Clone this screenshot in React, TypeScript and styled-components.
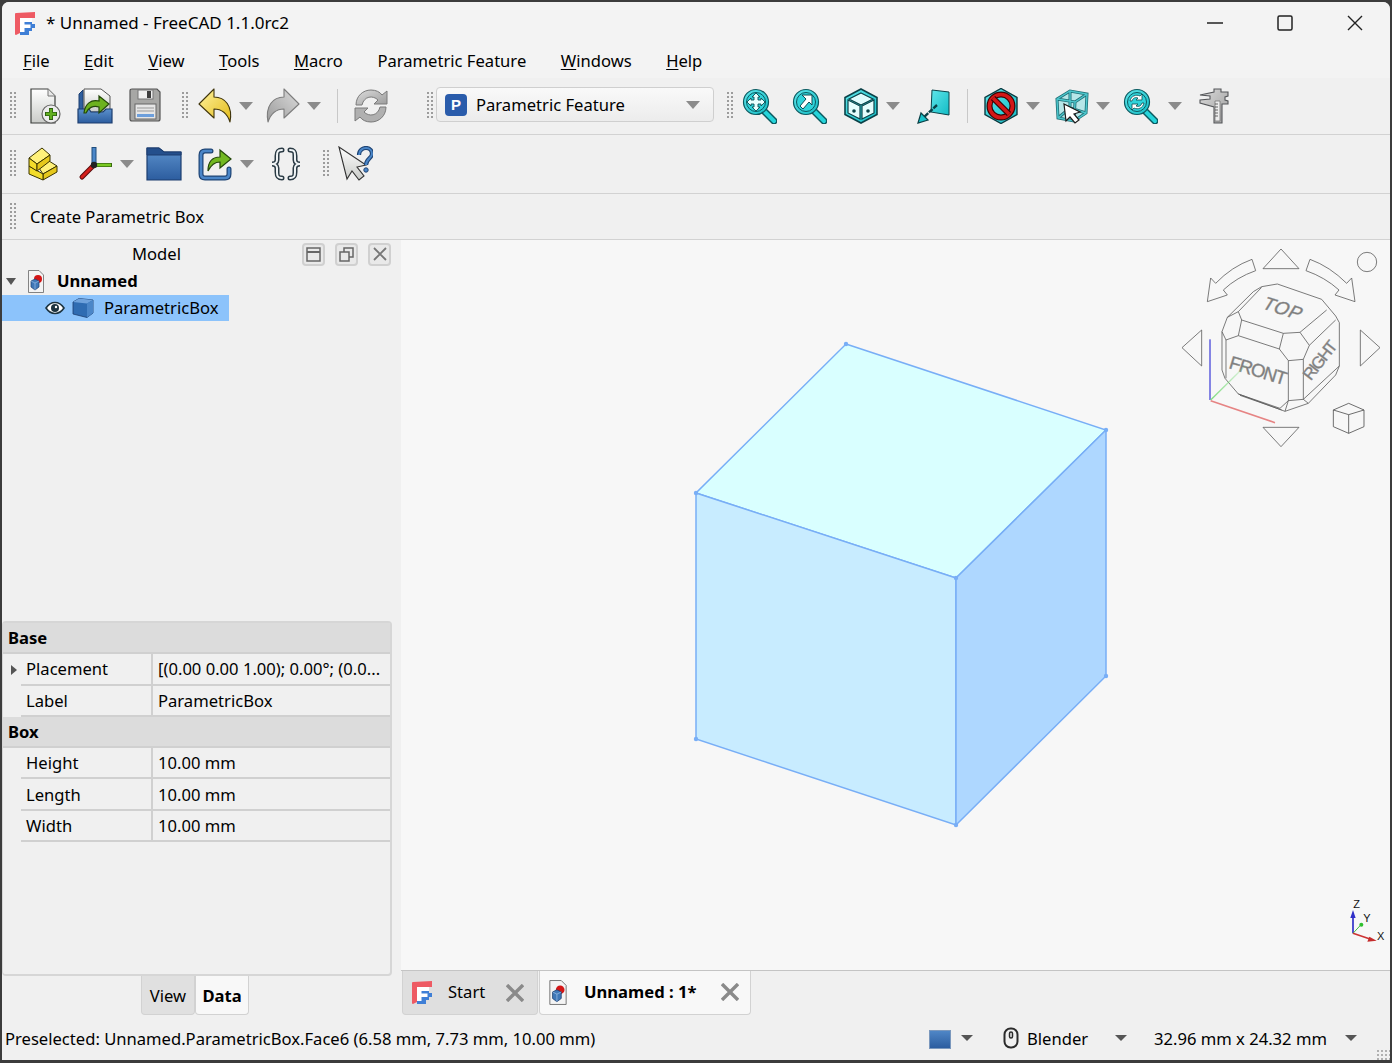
import React from 'react'
import styled, { createGlobalStyle } from 'styled-components'

const GlobalStyle = createGlobalStyle`
  html, body, #root {
    margin: 0;
    height: 100%;
    overflow: hidden;
    background: #3c3c3c;
  }
  * {
    box-sizing: border-box;
  }
`

function Gradients() {
  return (
    <svg width="0" height="0" style={{ position: 'absolute' }}>
      <defs>
        <linearGradient id="paper" x1="0" y1="0" x2="0" y2="1">
          <stop offset="0" stopColor="#ffffff" />
          <stop offset="1" stopColor="#c9cbc8" />
        </linearGradient>
        <linearGradient id="blue" x1="0" y1="0" x2="0" y2="1">
          <stop offset="0" stopColor="#5b90cc" />
          <stop offset="1" stopColor="#2c5d9f" />
        </linearGradient>
        <linearGradient id="yellow" x1="0" y1="0" x2="1" y2="1">
          <stop offset="0" stopColor="#fff3a0" />
          <stop offset="1" stopColor="#e3bb18" />
        </linearGradient>
        <linearGradient id="gray" x1="0" y1="0" x2="1" y2="1">
          <stop offset="0" stopColor="#dcdcdc" />
          <stop offset="1" stopColor="#9b9b9b" />
        </linearGradient>
        <linearGradient id="teal" x1="0" y1="0" x2="1" y2="1">
          <stop offset="0" stopColor="#5fe6ea" />
          <stop offset="1" stopColor="#13bcc5" />
        </linearGradient>
        <linearGradient id="fade" x1="0" y1="1" x2="1" y2="0">
          <stop offset="0" stopColor="#7fdc7f" />
          <stop offset="1" stopColor="#7fdc7f" stopOpacity="0.1" />
        </linearGradient>
      </defs>
    </svg>
  )
}

const Svg = ({ children, size = 36 }: { children: React.ReactNode; size?: number }) => (
  <svg width={size} height={size} viewBox="0 0 36 36">{children}</svg>
)

const NewIcon = () => (
  <Svg>
    <path d="M4 1H21L28 8V35H4Z" fill="url(#paper)" stroke="#3c3f3c" strokeWidth="1.2" />
    <path d="M21 1V8H28" fill="#e8e8e8" stroke="#777" strokeWidth="1" />
    <circle cx="24" cy="26" r="9" fill="#ececec" stroke="#666" strokeWidth="1.2" />
    <path d="M24 20V32M18 26H30" stroke="#2d5f10" strokeWidth="4" />
    <path d="M24 21V31M19 26H29" stroke="#62b021" strokeWidth="2.4" />
  </Svg>
)
const OpenIcon = () => (
  <Svg>
    <path d="M2 23V6L6 2V23Z" fill="#2f5f9f" stroke="#1d3f70" />
    <path d="M7 1H24L33 8V24H7Z" fill="url(#paper)" stroke="#555" />
    <path d="M1 21H12L14 24H26L29 21H35V35H1Z" fill="url(#blue)" stroke="#1c3d6e" strokeWidth="1.2" />
    <path d="M7 25C8 16 14 11 22 13V8L32 16L22 25V19C16 17 11 20 9 25Z" fill="#6cb21f" stroke="#24480a" strokeWidth="1.2" />
  </Svg>
)
const SaveIcon = () => (
  <Svg>
    <path d="M5 1H30L33 4V31Q33 33 31 33H5Q3 33 3 31V3Q3 1 5 1Z" fill="#a7a7a5" stroke="#555" strokeWidth="1.2" />
    <rect x="11" y="2" width="15" height="9" fill="#efefef" stroke="#777" />
    <rect x="20" y="3" width="4" height="7" fill="#3d3d3d" />
    <rect x="8" y="16" width="21" height="15" fill="#e6e6e6" stroke="#666" />
    <path d="M10 20H27M10 23H27" stroke="#999" />
    <rect x="10" y="26" width="17" height="3" fill="#6d9fdc" />
  </Svg>
)
const ArrowShape = ({ fill, stroke }: { fill: string; stroke: string }) => (
  <path d="M1 16L16 1V9C27 9 35 18 32 34C29 25 24 21 16 21V30Z" fill={fill} stroke={stroke} strokeWidth="1.1" strokeLinejoin="round" />
)
const UndoIcon = () => (
  <Svg><ArrowShape fill="url(#yellow)" stroke="#40350c" /></Svg>
)
const RedoIcon = () => (
  <Svg><g transform="translate(36 0) scale(-1 1)"><ArrowShape fill="url(#gray)" stroke="#7d7d7d" /></g></Svg>
)
const RefreshIcon = () => (
  <Svg>
    <path d="M3 17C3 8 10 2 18 2C23 2 27 4 29 7L34 3V16H21L25 12C20 7 11 8 9 17Z" fill="url(#gray)" stroke="#7a7a7a" />
    <path d="M33 19C33 28 26 34 18 34C13 34 9 32 7 29L2 33V20H15L11 24C16 29 25 28 27 19Z" fill="#b0b0b0" stroke="#7a7a7a" />
  </Svg>
)
const Lens = ({ children }: { children?: React.ReactNode }) => (
  <>
    <path d="M23 23L33 33" stroke="#0b5a60" strokeWidth="7" strokeLinecap="round" />
    <path d="M23 23L33 33" stroke="#25d4da" strokeWidth="4" strokeLinecap="round" />
    <circle cx="15" cy="14" r="12.5" fill="url(#teal)" stroke="#0b5a60" strokeWidth="1.2" />
    <circle cx="15" cy="14" r="9.5" fill="#2fd3da" stroke="#0b5a60" strokeWidth="1" />
    {children}
  </>
)
const FitAllIcon = () => (
  <Svg>
    <Lens>
      <path d="M15 5L19 9H17V12H20V10L24 14L20 18V16H17V19H19L15 23L11 19H13V16H10V18L6 14L10 10V12H13V9H11Z" fill="#e8ffff" stroke="#0b4d52" strokeWidth="0.9" />
    </Lens>
  </Svg>
)
const FitSelectionIcon = () => (
  <Svg>
    <Lens>
      <path d="M21 7V17L18 14L12 21L9 18L15 11L11 7Z" fill="#ffffff" stroke="#0b4d52" strokeWidth="1" />
    </Lens>
  </Svg>
)
const IsoIcon = () => (
  <Svg>
    <path d="M18 1L34 9.5V26.5L18 35L2 26.5V9.5Z" fill="url(#teal)" stroke="#0b4248" strokeWidth="1.6" />
    <path d="M18 5L30 11L18 17L6 11Z" fill="#dffcfd" stroke="#0b4248" strokeWidth="1.2" />
    <path d="M5 12L17 18V31L5 25ZM31 12L19 18V31L31 25Z" fill="#e4fdfd" stroke="#0b4248" strokeWidth="1.2" />
    <circle cx="11" cy="23" r="1.8" fill="#0b4248" />
    <circle cx="25" cy="23" r="1.8" fill="#0b4248" />
  </Svg>
)
const SectionIcon = () => (
  <Svg>
    <path d="M16 2L33 4V27L15 24Z" fill="url(#teal)" stroke="#0b4248" strokeWidth="1" />
    <path d="M21 17L7 30" stroke="#0b4248" strokeWidth="2.4" strokeDasharray="5 1" />
    <path d="M2 35L5 25L12 32Z" fill="#19c4cc" stroke="#0b4248" strokeWidth="1.2" />
  </Svg>
)
const StopIcon = () => (
  <Svg>
    <path d="M18 0.5L34 9.5V26.5L18 35.5L2 26.5V9.5Z" fill="url(#teal)" stroke="#0b3a40" strokeWidth="1.4" />
    <circle cx="18" cy="18" r="11.5" fill="none" stroke="#3a0505" strokeWidth="6" />
    <circle cx="18" cy="18" r="11.5" fill="none" stroke="#d31717" strokeWidth="3.6" />
    <path d="M10 10L26 26" stroke="#3a0505" strokeWidth="6" />
    <path d="M10 10L26 26" stroke="#d31717" strokeWidth="3.6" />
  </Svg>
)
const BoxSelectIcon = () => (
  <Svg>
    <path d="M3 11L16 3L33 6L32 25L20 33L4 30Z" fill="#8fdfe3" fillOpacity="0.6" />
    <path d="M3 11L16 3L33 6L32 25L20 33L4 30ZM3 11L21 14L33 6M21 14L20 33M16 3V20L4 30M16 20L32 25" fill="none" stroke="#1f6f76" strokeWidth="3" />
    <path d="M3 11L16 3L33 6L32 25L20 33L4 30ZM3 11L21 14L33 6M21 14L20 33M16 3V20L4 30M16 20L32 25" fill="none" stroke="#4cc6cc" strokeWidth="1.4" />
    <path d="M10 16L12 33L16 29L21 35L25 32L20 26L26 24Z" fill="#fff" stroke="#1b1b1b" strokeWidth="1.2" />
  </Svg>
)
const SyncLensIcon = () => (
  <Svg>
    <Lens>
      <path d="M8 13C9 8 14 6 18 8L20 6V12H14L16 10C13 9 11 10 10 13Z" fill="#ffffff" stroke="#0b4d52" strokeWidth="0.8" />
      <path d="M22 15C21 20 16 22 12 20L10 22V16H16L14 18C17 19 19 18 20 15Z" fill="#ffffff" stroke="#0b4d52" strokeWidth="0.8" />
    </Lens>
  </Svg>
)
const CaliperIcon = () => (
  <Svg>
    <path d="M4 7L18 4V1H25V4H32V8L29 9V12L32 13V16H26V35H18V19L4 15V12L14 11V8Z" fill="url(#gray)" stroke="#55575a" strokeWidth="1.1" />
    <path d="M19 13H24V33H19Z" fill="#ededed" stroke="#777" strokeWidth="0.8" />
    <path d="M19 16H22M19 19H22M19 22H22M19 25H22M19 28H22" stroke="#444" strokeWidth="0.8" />
  </Svg>
)
const PartIcon = () => (
  <Svg>
    <g stroke="#3a3400" strokeWidth="1" strokeLinejoin="round">
      <path d="M14 22L24 15L32 20L18 28Z" fill="#fff17a" />
      <path d="M18 28L32 20V26L18 34Z" fill="#e6c81c" />
      <path d="M4 20L18 28V34L4 28Z" fill="#f3dc2a" />
      <path d="M4 12L17 2L25 9L12 18Z" fill="#fff17a" />
      <path d="M4 12L12 18V25L4 20Z" fill="#f3dc2a" />
      <path d="M12 18L25 9V15L12 25Z" fill="#e6c81c" />
    </g>
  </Svg>
)
const DatumIcon = () => (
  <Svg>
    <path d="M16 19V1" stroke="#1f4d7d" strokeWidth="5" />
    <path d="M16 19V2" stroke="#4a86c8" strokeWidth="3" />
    <path d="M16 19H34" stroke="#3a6a10" strokeWidth="4" />
    <path d="M16 19H33" stroke="#79c922" strokeWidth="2.4" />
    <path d="M16 19L4 31" stroke="#5a0d0d" strokeWidth="5" strokeLinecap="round" />
    <path d="M16 19L4 31" stroke="#d5201c" strokeWidth="3" strokeLinecap="round" />
    <circle cx="16" cy="19" r="3.2" fill="#222" />
  </Svg>
)
const FolderIcon = () => (
  <Svg>
    <path d="M1 2H13L18 6H35V34H1Z" fill="url(#blue)" stroke="#1c3d6e" strokeWidth="1.2" />
    <path d="M1 2H13L18 6H35V9H1Z" fill="#244f8c" stroke="#1c3d6e" />
  </Svg>
)
const ShareIcon = () => (
  <Svg>
    <path d="M14 5H8Q4 5 4 9V28Q4 32 8 32H28Q32 32 32 28V23" fill="none" stroke="#1f4474" strokeWidth="5" strokeLinecap="round" />
    <path d="M14 5H8Q4 5 4 9V28Q4 32 8 32H28Q32 32 32 28V23" fill="none" stroke="#4a86c8" strokeWidth="2.6" strokeLinecap="round" />
    <path d="M11 25C11 15 16 11 23 11V4L34 13L23 22V16C18 16 14 19 11 25Z" fill="#72b821" stroke="#24480a" strokeWidth="1.2" />
  </Svg>
)
const bracePath = 'M14 4C9 4 9 7 9 10V14C9 16 7 18 4 18C7 18 9 20 9 22V26C9 29 9 32 14 32M22 4C27 4 27 7 27 10V14C27 16 29 18 32 18C29 18 27 20 27 22V26C27 29 27 32 22 32'
const BracesIcon = () => (
  <Svg>
    <path d={bracePath} fill="none" stroke="#2a3a44" strokeWidth="5" strokeLinecap="round" />
    <path d={bracePath} fill="none" stroke="#f0f4f6" strokeWidth="2" strokeLinecap="round" />
  </Svg>
)
const WhatsThisIcon = () => (
  <Svg>
    <path d="M2 1L10 33L15 25L22 34L27 30L20 21L29 19Z" fill="url(#paper)" stroke="#333" strokeWidth="1.1" />
    <path d="M22 9C22 4 26 2 29 2C33 2 35 5 35 8C35 12 29 13 29 19" fill="none" stroke="#1f4474" strokeWidth="4.2" />
    <path d="M22 9C22 4 26 2 29 2C33 2 35 5 35 8C35 12 29 13 29 19" fill="none" stroke="#4a86c8" strokeWidth="2" />
    <circle cx="29" cy="24" r="2.2" fill="#4a86c8" stroke="#1f4474" />
  </Svg>
)
const FreeCadLogo = () => (
  <svg width="20" height="23" viewBox="0 0 20 23">
    <path d="M0 2Q0 1 1 1L20 0V6H5V21L1 23Q0 23 0 22Z" fill="#ee5a63" />
    <path d="M8 9H17V12H20V16H17V19H14V23H5V19H8Z" fill="#3f7fd6" />
    <path d="M5 6H17V10H9.5V12.5H15.5V16H9.5V20H5Z" fill="#ffffff" />
  </svg>
)
const DocIcon = ({ w, h }: { w: number; h: number }) => (
  <svg width={w} height={h} viewBox="0 0 16 23">
    <path d="M0.5 0.5H11L15.5 5V22.5H0.5Z" fill="#f4f4f4" stroke="#666" strokeWidth="0.8" />
    <circle cx="10" cy="9" r="4" fill="#d41616" />
    <path d="M7 9L11 11V17L7 20L3 17V11Z" fill="#3f78b8" stroke="#1c3d6e" strokeWidth="0.7" />
    <path d="M3 11L7 13L11 11M7 13V20" fill="none" stroke="#a8c8ec" strokeWidth="0.6" />
  </svg>
)
const EyeIcon = () => (
  <svg width="20" height="14" viewBox="0 0 20 14">
    <path d="M1 7C4 2.5 7 1.5 10 1.5C13 1.5 16 2.5 19 7C16 11.5 13 12.5 10 12.5C7 12.5 4 11.5 1 7Z" fill="#fff" stroke="#1c3340" strokeWidth="1.6" />
    <circle cx="10" cy="7" r="4" fill="#1c3340" />
    <circle cx="11" cy="6" r="1.2" fill="#fff" />
  </svg>
)
const BoxIcon = () => (
  <svg width="22" height="20" viewBox="0 0 22 20">
    <path d="M1 4L7 0.5L21 2V15L15 19.5L1 16Z" fill="#2f6cb2" stroke="#1c3d6e" strokeWidth="0.8" />
    <path d="M1 4L15 5.5L21 2L7 0.5Z" fill="#6fa2dc" />
    <path d="M15 5.5V19.5L21 15V2Z" fill="#4b86c8" />
  </svg>
)
const MouseIcon = () => (
  <svg width="16" height="22" viewBox="0 0 16 22">
    <rect x="1.5" y="1.5" width="13" height="19" rx="6" fill="none" stroke="#2b2b2b" strokeWidth="2" />
    <rect x="6.5" y="5" width="3" height="6" rx="1.5" fill="none" stroke="#2b2b2b" strokeWidth="1.5" />
  </svg>
)

const Window = styled.div`
  margin: 2px 2px 3px;
  height: calc(100vh - 5px);
  display: flex;
  flex-direction: column;
  background: #f0f0f0;
  border-radius: 7px 7px 0 0;
  overflow: hidden;
  color: #000;
  font-family: 'Noto Sans', 'Open Sans', sans-serif;
  font-size: 16.6px;
`
const TitleBar = styled.div`
  flex: none;
  height: 42px;
  display: flex;
  align-items: center;
  padding-left: 13px;
  background: #f3f3f3;
`
const TitleText = styled.span`
  margin-left: 11px;
  padding-bottom: 2px;
  flex: 1;
  font-size: 17px;
`
const WindowButton = styled.div`
  width: 70px;
  height: 42px;
  display: flex;
  align-items: center;
  justify-content: center;
`
const MenuBar = styled.nav`
  flex: none;
  height: 34px;
  display: flex;
  align-items: center;
  gap: 34.5px;
  padding-left: 21px;
  padding-bottom: 2px;
  background: #f3f3f3;
`
const MenuItem = styled.span`
  u {
    text-underline-offset: 2px;
    text-decoration-thickness: 1px;
  }
`
const ToolRow = styled.div<{ $height: number }>`
  flex: none;
  height: ${({ $height }) => $height}px;
  display: flex;
  align-items: center;
  padding-left: 8px;
  background: #f0f0f0;
  border-bottom: 1px solid #d2d2d2;
`
const Grip = styled.div<{ $ml?: number }>`
  flex: none;
  width: 7px;
  height: 28px;
  margin-left: ${({ $ml }) => $ml ?? 0}px;
  background-image: radial-gradient(circle at 1px 1px, #9c9c9c 0.8px, transparent 1px);
  background-size: 4px 4px;
`
const Tool = styled.div<{ $ml?: number; $w?: number }>`
  flex: none;
  width: ${({ $w }) => $w ?? 50}px;
  margin-left: ${({ $ml }) => $ml ?? 0}px;
  height: 36px;
  display: flex;
  justify-content: center;
  align-items: center;
`
const Caret = styled.div<{ $ml?: number; $small?: boolean }>`
  flex: none;
  width: 0;
  height: 0;
  margin-left: ${({ $ml }) => $ml ?? 0}px;
  border-left: ${({ $small }) => ($small ? 6 : 7.5)}px solid transparent;
  border-right: ${({ $small }) => ($small ? 6 : 7.5)}px solid transparent;
  border-top: ${({ $small }) => ($small ? 6 : 8)}px solid ${({ $small }) => ($small ? '#555' : '#8b8b8b')};
`
const Separator = styled.div<{ $ml?: number }>`
  flex: none;
  width: 1px;
  height: 34px;
  margin-left: ${({ $ml }) => $ml ?? 0}px;
  background: #c8c8c8;
`
const Combo = styled.div`
  flex: none;
  width: 278px;
  height: 35px;
  margin-left: 2px;
  margin-bottom: 3px;
  display: flex;
  align-items: center;
  padding: 0 13px 0 8px;
  border: 1px solid #cfcfcf;
  border-radius: 4px;
  background: linear-gradient(#f9f9f9, #ececec);
`
const ComboBadge = styled.span`
  width: 22px;
  height: 22px;
  border-radius: 4px;
  background: #2a5cab;
  color: #fff;
  font-family: 'Liberation Sans', sans-serif;
  font-weight: 700;
  font-size: 15px;
  display: flex;
  align-items: center;
  justify-content: center;
`
const ComboLabel = styled.span`
  flex: 1;
  margin-left: 9px;
`
const HintText = styled.span`
  margin-left: 13px;
`
const Main = styled.div`
  flex: 1;
  min-height: 0;
  display: flex;
`
const LeftPanel = styled.aside`
  flex: none;
  width: 399px;
  display: flex;
  flex-direction: column;
  padding-bottom: 8px;
  background: #f0f0f0;
`
const DockHeader = styled.div`
  flex: none;
  height: 28px;
  display: flex;
  align-items: center;
  gap: 10px;
`
const DockTitle = styled.span`
  flex: none;
  width: 290px;
  padding-left: 19px;
  padding-bottom: 2px;
  text-align: center;
`
const DockButton = styled.div`
  width: 23px;
  height: 23px;
  display: flex;
  align-items: center;
  justify-content: center;
  border: 2px solid #d0d0d0;
  border-radius: 4px;
  background: #e9e9e9;
`
const Tree = styled.div`
  flex: 1;
  min-height: 0;
`
const TreeRow = styled.div<{ $selected?: boolean; $indent: number }>`
  width: ${({ $selected }) => ($selected ? '227px' : 'auto')};
  height: 26.5px;
  display: flex;
  align-items: center;
  padding-left: ${({ $indent }) => $indent}px;
  background: ${({ $selected }) => ($selected ? '#8cc3fb' : 'transparent')};
`
const TreeCaret = styled.div`
  width: 0;
  height: 0;
  margin-right: 12px;
  border-left: 5.5px solid transparent;
  border-right: 5.5px solid transparent;
  border-top: 7px solid #555;
`
const TreeIcon = styled.span`
  display: flex;
  margin-left: 7px;
`
const TreeLabel = styled.span<{ $bold?: boolean }>`
  margin-left: ${({ $bold }) => ($bold ? 13 : 10)}px;
  padding-bottom: 1px;
  font-weight: ${({ $bold }) => ($bold ? 700 : 400)};
`
const PropFrame = styled.section`
  flex: none;
  width: 390px;
  height: 355px;
  border: 2px solid #d6d6d6;
  border-left-width: 1px;
  border-radius: 4px;
  background: #f0f0f0;
`
const PropGroup = styled.div`
  height: 31.3px;
  display: flex;
  align-items: center;
  padding-left: 5px;
  font-weight: 700;
  background: #dcdcdc;
  border-bottom: 2px solid #d0d0d0;
`
const PropRow = styled.div`
  height: 31.3px;
  display: grid;
  grid-template-columns: 18px 132px 1fr;
  align-items: stretch;
`
const PropExpand = styled.div<{ $leaf?: boolean }>`
  display: flex;
  align-items: center;
  padding-left: 8px;
  &::before {
    content: '';
    display: ${({ $leaf }) => ($leaf ? 'none' : 'block')};
    border-top: 5px solid transparent;
    border-bottom: 5px solid transparent;
    border-left: 6px solid #555;
  }
`
const PropName = styled.div`
  display: flex;
  align-items: center;
  padding-left: 5px;
  border-bottom: 2px solid #d0d0d0;
  border-right: 2px solid #d0d0d0;
`
const PropValue = styled.div`
  display: flex;
  align-items: center;
  padding-left: 5px;
  white-space: nowrap;
  overflow: hidden;
  border-bottom: 2px solid #d0d0d0;
`
const DockTabs = styled.div`
  flex: none;
  display: flex;
  padding-left: 139px;
`
const DockTab = styled.div<{ $active?: boolean }>`
  width: 54px;
  height: 39px;
  display: flex;
  align-items: center;
  justify-content: center;
  font-weight: ${({ $active }) => ($active ? 700 : 400)};
  background: ${({ $active }) => ($active ? '#f8f8f8' : '#e0e0e0')};
  border: 1px solid #d2d2d2;
  border-top: none;
  border-radius: 0 0 4px 4px;
`
const ViewColumn = styled.div`
  flex: 1;
  min-width: 0;
  display: flex;
  flex-direction: column;
`
const Viewport = styled.div`
  flex: 1;
  min-height: 0;
  position: relative;
  background: #f7f7f7;
  border-bottom: 1px solid #c4c4c4;
`
const Scene = styled.svg`
  position: absolute;
  left: 0;
  top: 0;
`
const TabBar = styled.div`
  flex: none;
  height: 52px;
  display: flex;
  align-items: flex-start;
  padding-left: 1px;
  gap: 1px;
`
const DocTab = styled.div<{ $active?: boolean }>`
  width: ${({ $active }) => ($active ? 212 : 136)}px;
  margin-top: ${({ $active }) => ($active ? -1 : 0)}px;
  height: ${({ $active }) => ($active ? 45 : 44)}px;
  display: flex;
  align-items: center;
  padding-left: 9px;
  background: ${({ $active }) => ($active ? '#f8f8f8' : '#dfdfdf')};
  border: 1px solid #d2d2d2;
  border-top: none;
  border-radius: 0 0 4px 4px;
`
const DocTabLabel = styled.span<{ $active?: boolean }>`
  flex: 1;
  margin-left: ${({ $active }) => ($active ? 17 : 16)}px;
  padding-bottom: 2px;
  font-weight: ${({ $active }) => ($active ? 700 : 400)};
`
const TabClose = styled.svg<{ $active?: boolean }>`
  flex: none;
  margin-right: ${({ $active }) => ($active ? 11 : 13)}px;
`
const StatusBar = styled.footer`
  flex: none;
  height: 37px;
  display: flex;
  align-items: center;
  padding-left: 3px;
  padding-bottom: 7px;
  position: relative;
  background: #f0f0f0;
`
const StatusText = styled.span`
  flex: 1;
`
const StatusSwatch = styled.div`
  width: 22px;
  height: 19px;
  margin-top: 2px;
  background: linear-gradient(#4f86c6, #2c5d9f);
  border: 1px solid #7b98bd;
`
const StatusLabel = styled.span<{ $ml?: number; $w?: number }>`
  display: flex;
  margin-left: ${({ $ml }) => $ml ?? 0}px;
  width: ${({ $w }) => ($w ? `${$w}px` : 'auto')};
  white-space: nowrap;
`
const SizeGrip = styled.div`
  position: absolute;
  right: 0;
  bottom: 0;
  width: 13px;
  height: 10px;
  background-image: radial-gradient(circle at 1px 1px, #b0b0b0 1px, transparent 1.2px);
  background-size: 4px 4px;
`

const CloseX = ({ size, color, width }: { size: number; color: string; width: number }) => (
  <path d={`M1 1L${size - 1} ${size - 1}M${size - 1} 1L1 ${size - 1}`} stroke={color} strokeWidth={width} fill="none" />
)

function NaviCube() {
  const line = { fill: 'none', stroke: '#5a5a5a', strokeWidth: 2.4, strokeLinejoin: 'round' as const }
  const shape = { ...line, fill: '#f7f7f7' }
  const label = { fill: '#7d7d7d', stroke: '#8d8d8d', strokeWidth: 1.2, fontFamily: 'Liberation Sans, sans-serif' }
  return (
    <g transform="translate(769 0) scale(0.33333)">
      <polygon {...shape} points="333,27 387,86 279,86" />
      <polygon {...shape} points="279,562 387,562 333,620" />
      <polygon {...shape} points="95,270 95,378 36,323" />
      <polygon {...shape} points="571,270 571,378 630,323" />
      <circle {...shape} cx="591" cy="66" r="29" />
      <path {...shape} d="M246 58L257 92Q200 112 160 150L172 165L112 185L122 114L137 130Q185 80 246 58Z" />
      <path {...shape} d="M420 58L408 92Q465 112 507 150L495 165L555 185L545 114L530 130Q480 80 420 58Z" />
      <path {...shape} d="M275 140L322 132L455 178L497 228L508 248V378L497 405L415 490L345 514L205 462L165 415L156 390V275L172 232L250 155Z" />
      <path {...line} d="M205 215L275 142M205 215L215 240L340 280L390 277L470 210M215 240L205 287L328 327L340 280M172 232L205 215M168 300L205 287M156 275L168 300V415M328 327L355 362V482L330 505L205 462M390 277L418 316L400 358L355 362M400 358V478L355 482M400 478L415 490M418 316L497 240M400 478L508 378M355 482L345 514M210 466L335 510" />
      <text {...label} fontSize="56" textLength="118" transform="translate(272 204) rotate(18) skewX(-14)">TOP</text>
      <text {...label} fontSize="56" textLength="178" transform="translate(174 384) rotate(17)">FRONT</text>
      <text {...label} fontSize="50" textLength="135" transform="translate(422 424) rotate(-52)">RIGHT</text>
      <path d="M120 298V480" stroke="#8484e4" strokeWidth="6" />
      <path d="M122 480L235 368" stroke="url(#fade)" strokeWidth="4" />
      <path d="M122 482L315 548" stroke="#e68484" strokeWidth="5" />
      <path {...line} stroke="#4a4a4a" d="M536 490L582 510V560L536 580L490 560V510ZM490 510L536 524L582 510M536 524V580" />
    </g>
  )
}

function Corner() {
  const label = { fontFamily: 'Liberation Sans, sans-serif', fontSize: 33, fill: '#111' }
  return (
    <g transform="translate(499 650) scale(0.33333)">
      <path d="M1359 130V78" stroke="#2f2fc8" strokeWidth="5" />
      <path d="M1359 60L1367 84H1351Z" fill="#2f2fc8" />
      <path d="M1359 130L1385 102" stroke="#3fbf3f" strokeWidth="3" />
      <circle cx="1384" cy="104" r="6" fill="#2fc02f" />
      <path d="M1359 130L1410 147" stroke="#cc3333" strokeWidth="5" />
      <path d="M1430 152L1402 155L1408 140Z" fill="#c42c2c" />
      <text {...label} x="1360" y="54">Z</text>
      <text {...label} x="1390" y="96">Y</text>
      <text {...label} x="1431" y="151">X</text>
    </g>
  )
}

function Cube() {
  const edge = '#78aef6'
  const vertices = [[445, 104], [705, 190], [555, 338], [295, 253], [295, 499], [555, 585], [705, 436]]
  return (
    <g>
      <polygon points="445,104 705,190 555,338 295,253" fill="#d9ffff" stroke={edge} strokeWidth="1.5" />
      <polygon points="295,253 555,338 555,585 295,499" fill="#c8ecff" stroke={edge} strokeWidth="1.5" />
      <polygon points="555,338 705,190 705,436 555,585" fill="#aed7ff" stroke={edge} strokeWidth="1.5" />
      {vertices.map(([x, y]) => (
        <circle key={`${x}-${y}`} cx={x} cy={y} r="2.2" fill={edge} />
      ))}
    </g>
  )
}

export default function App(): React.ReactElement {
  return (
    <>
      <GlobalStyle />
      <Gradients />
      <Window>
        <TitleBar>
          <FreeCadLogo />
          <TitleText>* Unnamed - FreeCAD 1.1.0rc2</TitleText>
          <WindowButton>
            <svg width="16" height="2" viewBox="0 0 16 2"><path d="M0 1H16" stroke="#222" strokeWidth="1.3" /></svg>
          </WindowButton>
          <WindowButton>
            <svg width="16" height="16" viewBox="0 0 16 16"><rect x="1" y="1" width="14" height="14" rx="1.5" fill="none" stroke="#222" strokeWidth="1.5" /></svg>
          </WindowButton>
          <WindowButton>
            <svg width="16" height="16" viewBox="0 0 16 16"><CloseX size={16} color="#222" width={1.4} /></svg>
          </WindowButton>
        </TitleBar>
        <MenuBar>
          <MenuItem><u>F</u>ile</MenuItem>
          <MenuItem><u>E</u>dit</MenuItem>
          <MenuItem><u>V</u>iew</MenuItem>
          <MenuItem><u>T</u>ools</MenuItem>
          <MenuItem><u>M</u>acro</MenuItem>
          <MenuItem>Parametric Feature</MenuItem>
          <MenuItem><u>W</u>indows</MenuItem>
          <MenuItem><u>H</u>elp</MenuItem>
        </MenuBar>
        <ToolRow $height={57}>
          <Grip />
          <Tool $ml={3}><NewIcon /></Tool>
          <Tool><OpenIcon /></Tool>
          <Tool><SaveIcon /></Tool>
          <Grip $ml={12} />
          <Tool $ml={2}><UndoIcon /></Tool>
          <Caret $ml={-2} />
          <Tool $ml={4}><RedoIcon /></Tool>
          <Caret />
          <Separator $ml={16} />
          <Tool $ml={8}><RefreshIcon /></Tool>
          <Grip $ml={31} />
          <Combo>
            <ComboBadge>P</ComboBadge>
            <ComboLabel>Parametric Feature</ComboLabel>
            <Caret />
          </Combo>
          <Grip $ml={13} />
          <Tool><FitAllIcon /></Tool>
          <Tool><FitSelectionIcon /></Tool>
          <Tool $ml={2}><IsoIcon /></Tool>
          <Caret />
          <Tool $ml={9}><SectionIcon /></Tool>
          <Separator $ml={8} />
          <Tool $ml={8}><StopIcon /></Tool>
          <Caret />
          <Tool $ml={7}><BoxSelectIcon /></Tool>
          <Caret $ml={-1} />
          <Tool $ml={5}><SyncLensIcon /></Tool>
          <Caret $ml={3} />
          <Tool $ml={7}><CaliperIcon /></Tool>
        </ToolRow>
        <ToolRow $height={59}>
          <Grip />
          <Tool $ml={6} $w={40}><PartIcon /></Tool>
          <Tool $ml={15} $w={36}><DatumIcon /></Tool>
          <Caret $ml={6} />
          <Tool $ml={12} $w={36}><FolderIcon /></Tool>
          <Tool $ml={15} $w={36}><ShareIcon /></Tool>
          <Caret $ml={7} />
          <Tool $ml={14} $w={36}><BracesIcon /></Tool>
          <Grip $ml={19} />
          <Tool $ml={7} $w={36}><WhatsThisIcon /></Tool>
        </ToolRow>
        <ToolRow $height={46}>
          <Grip />
          <HintText>Create Parametric Box</HintText>
        </ToolRow>
        <Main>
          <LeftPanel>
            <DockHeader>
              <DockTitle>Model</DockTitle>
              <DockButton>
                <svg width="15" height="15" viewBox="0 0 15 15"><rect x="1" y="1" width="13" height="13" fill="none" stroke="#666" strokeWidth="1.5" /><path d="M1 5H14" stroke="#666" strokeWidth="2" /></svg>
              </DockButton>
              <DockButton>
                <svg width="15" height="15" viewBox="0 0 15 15"><rect x="5" y="1" width="9" height="9" fill="none" stroke="#666" strokeWidth="1.5" /><rect x="1" y="5" width="9" height="9" fill="#e9e9e9" stroke="#666" strokeWidth="1.5" /></svg>
              </DockButton>
              <DockButton>
                <svg width="14" height="14" viewBox="0 0 14 14"><CloseX size={14} color="#777" width={1.8} /></svg>
              </DockButton>
            </DockHeader>
            <Tree>
              <TreeRow $indent={4}>
                <TreeCaret />
                <DocIcon w={16} h={23} />
                <TreeLabel $bold>Unnamed</TreeLabel>
              </TreeRow>
              <TreeRow $indent={43} $selected>
                <EyeIcon />
                <TreeIcon><BoxIcon /></TreeIcon>
                <TreeLabel>ParametricBox</TreeLabel>
              </TreeRow>
            </Tree>
            <PropFrame>
              <PropGroup>Base</PropGroup>
              <PropRow>
                <PropExpand />
                <PropName>Placement</PropName>
                <PropValue>[(0.00 0.00 1.00); 0.00°; (0.0...</PropValue>
              </PropRow>
              <PropRow>
                <PropExpand $leaf />
                <PropName>Label</PropName>
                <PropValue>ParametricBox</PropValue>
              </PropRow>
              <PropGroup>Box</PropGroup>
              <PropRow>
                <PropExpand $leaf />
                <PropName>Height</PropName>
                <PropValue>10.00 mm</PropValue>
              </PropRow>
              <PropRow>
                <PropExpand $leaf />
                <PropName>Length</PropName>
                <PropValue>10.00 mm</PropValue>
              </PropRow>
              <PropRow>
                <PropExpand $leaf />
                <PropName>Width</PropName>
                <PropValue>10.00 mm</PropValue>
              </PropRow>
            </PropFrame>
            <DockTabs>
              <DockTab>View</DockTab>
              <DockTab $active>Data</DockTab>
            </DockTabs>
          </LeftPanel>
          <ViewColumn>
            <Viewport>
              <Scene width="991" height="730" viewBox="0 0 991 730">
                <Cube />
                <NaviCube />
                <Corner />
              </Scene>
            </Viewport>
            <TabBar>
              <DocTab>
                <FreeCadLogo />
                <DocTabLabel>Start</DocTabLabel>
                <TabClose width="18" height="18" viewBox="0 0 18 18"><CloseX size={18} color="#8a8a8a" width={3.4} /></TabClose>
              </DocTab>
              <DocTab $active>
                <DocIcon w={18} h={25} />
                <DocTabLabel $active>Unnamed : 1*</DocTabLabel>
                <TabClose $active width="18" height="18" viewBox="0 0 18 18"><CloseX size={18} color="#8a8a8a" width={3.4} /></TabClose>
              </DocTab>
            </TabBar>
          </ViewColumn>
        </Main>
        <StatusBar>
          <StatusText>Preselected: Unnamed.ParametricBox.Face6 (6.58 mm, 7.73 mm, 10.00 mm)</StatusText>
          <StatusSwatch />
          <Caret $ml={10} $small />
          <StatusLabel $ml={30}><MouseIcon /></StatusLabel>
          <StatusLabel $ml={8} $w={88}>Blender</StatusLabel>
          <Caret $small />
          <StatusLabel $ml={27} $w={191}>32.96 mm x 24.32 mm</StatusLabel>
          <Caret $small />
          <StatusLabel $w={33} />
          <SizeGrip />
        </StatusBar>
      </Window>
    </>
  )
}
